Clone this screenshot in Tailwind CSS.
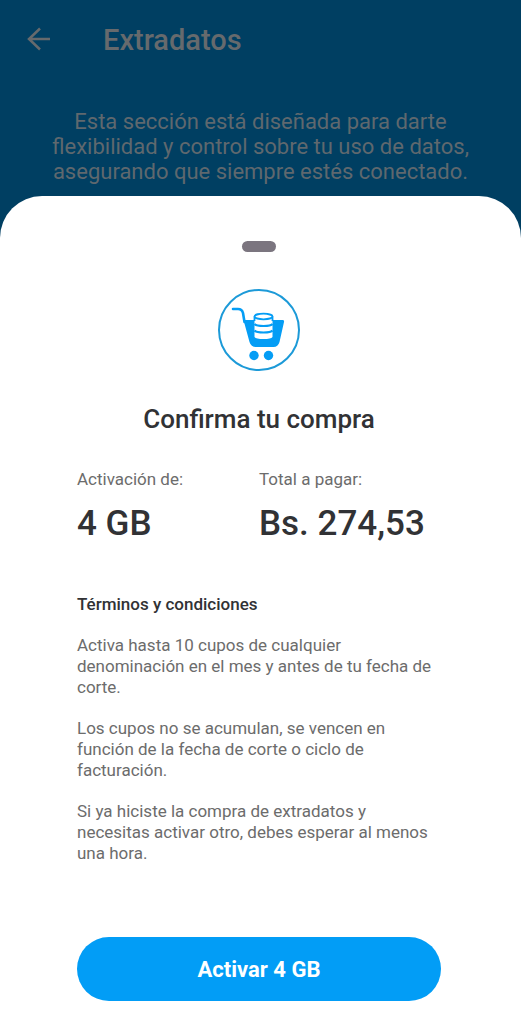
<!DOCTYPE html>
<html lang="es">
<head>
<meta charset="utf-8">
<meta name="viewport" content="width=device-width, initial-scale=1">
<title>Extradatos</title>
<script src="https://cdn.jsdelivr.net/npm/@tailwindcss/browser@4"></script>
</head>
<body class="flex min-h-screen flex-col bg-[#003f62] font-['Roboto',sans-serif] text-[#313235]">
  <header class="flex h-20 items-center px-6 text-[#666a6d]">
    <button type="button" aria-label="Volver" class="flex size-7 items-center justify-center">
      <svg class="size-7" viewBox="0 0 28 28" fill="none" stroke="currentColor" stroke-width="2.500" aria-hidden="true"><path d="M26 13H5M16 2.500L5 13L16 23.500"/></svg>
    </button>
    <h1 class="ml-[51px] text-[29px] leading-10 font-medium">Extradatos</h1>
  </header>
  <p class="mx-auto mt-[29px] mb-3 max-w-[420px] text-center text-[22px] leading-[25px] text-[#5f686e]">Esta sección está diseñada para darte flexibilidad y control sobre tu uso de datos, asegurando que siempre estés conectado.</p>

  <main class="flex grow flex-col items-center rounded-t-[42px] bg-white pt-[45px] pr-20 pb-[23px] pl-[77px]">
    <div class="h-[11px] w-[34px] rounded-full bg-[#7b757f]"></div>
    <svg class="mt-9 size-[84px]" viewBox="0 0 84 84" fill="none" aria-hidden="true">
      <circle cx="42" cy="42" r="40" stroke="#1c9ad8" stroke-width="2"/>
      <path d="M16 21H21Q25 21 26 25L27.500 34" stroke="#049df5" stroke-width="2.600" stroke-linecap="round"/>
      <path d="M26.500 32H65.500Q67.500 32 67 34L62.500 54Q61 59 56.500 59H39Q34 59 32.500 54Z" fill="#049df5"/>
      <path d="M37.500 28V49Q39 51 46.500 51Q54 51 55.500 49V28Z" fill="#fff"/>
      <ellipse cx="46.500" cy="28.500" rx="9" ry="2.800" fill="#fff" stroke="#049df5" stroke-width="1.800"/>
      <path d="M37.500 28.500V33M55.500 28.500V33" stroke="#049df5" stroke-width="1.800"/>
      <path d="M37.500 36Q39 38 46.500 38Q54 38 55.500 36M37.500 42.500Q39 44.500 46.500 44.500Q54 44.500 55.500 42.500" stroke="#049df5" stroke-width="2.200"/>
      <circle cx="37" cy="67.500" r="4.700" fill="#049df5"/>
      <circle cx="51.500" cy="67.500" r="4.700" fill="#049df5"/>
    </svg>
    <h2 class="mt-[31px] text-[26px] leading-8 font-medium">Confirma tu compra</h2>
    <dl class="mt-[34px] grid w-full grid-cols-2">
      <div>
        <dt class="text-[17px] leading-[21px] text-[#6c6c6c]">Activación de:</dt>
        <dd class="mt-[14px] text-[35px] leading-10 font-medium">4 GB</dd>
      </div>
      <div>
        <dt class="text-[17px] leading-[21px] text-[#6c6c6c]">Total a pagar:</dt>
        <dd class="mt-[14px] text-[35px] leading-10 font-medium whitespace-nowrap">Bs. 274,53</dd>
      </div>
    </dl>
    <section class="mt-[50px] flex w-full flex-col gap-5 text-[17px] leading-[21px] text-[#6c6c6c]">
      <h3 class="font-medium text-[#313235]">Términos y condiciones</h3>
      <p>Activa hasta 10 cupos de cualquier denominación en el mes y antes de tu fecha de corte.</p>
      <p>Los cupos no se acumulan, se vencen en función de la fecha de corte o ciclo de facturación.</p>
      <p>Si ya hiciste la compra de extradatos y necesitas activar otro, debes esperar al menos una hora.</p>
    </section>
    <button type="button" class="mt-auto h-16 w-full shrink-0 rounded-full bg-[#029df6] text-[22px] font-bold text-white">Activar 4 GB</button>
  </main>
</body>
</html>
